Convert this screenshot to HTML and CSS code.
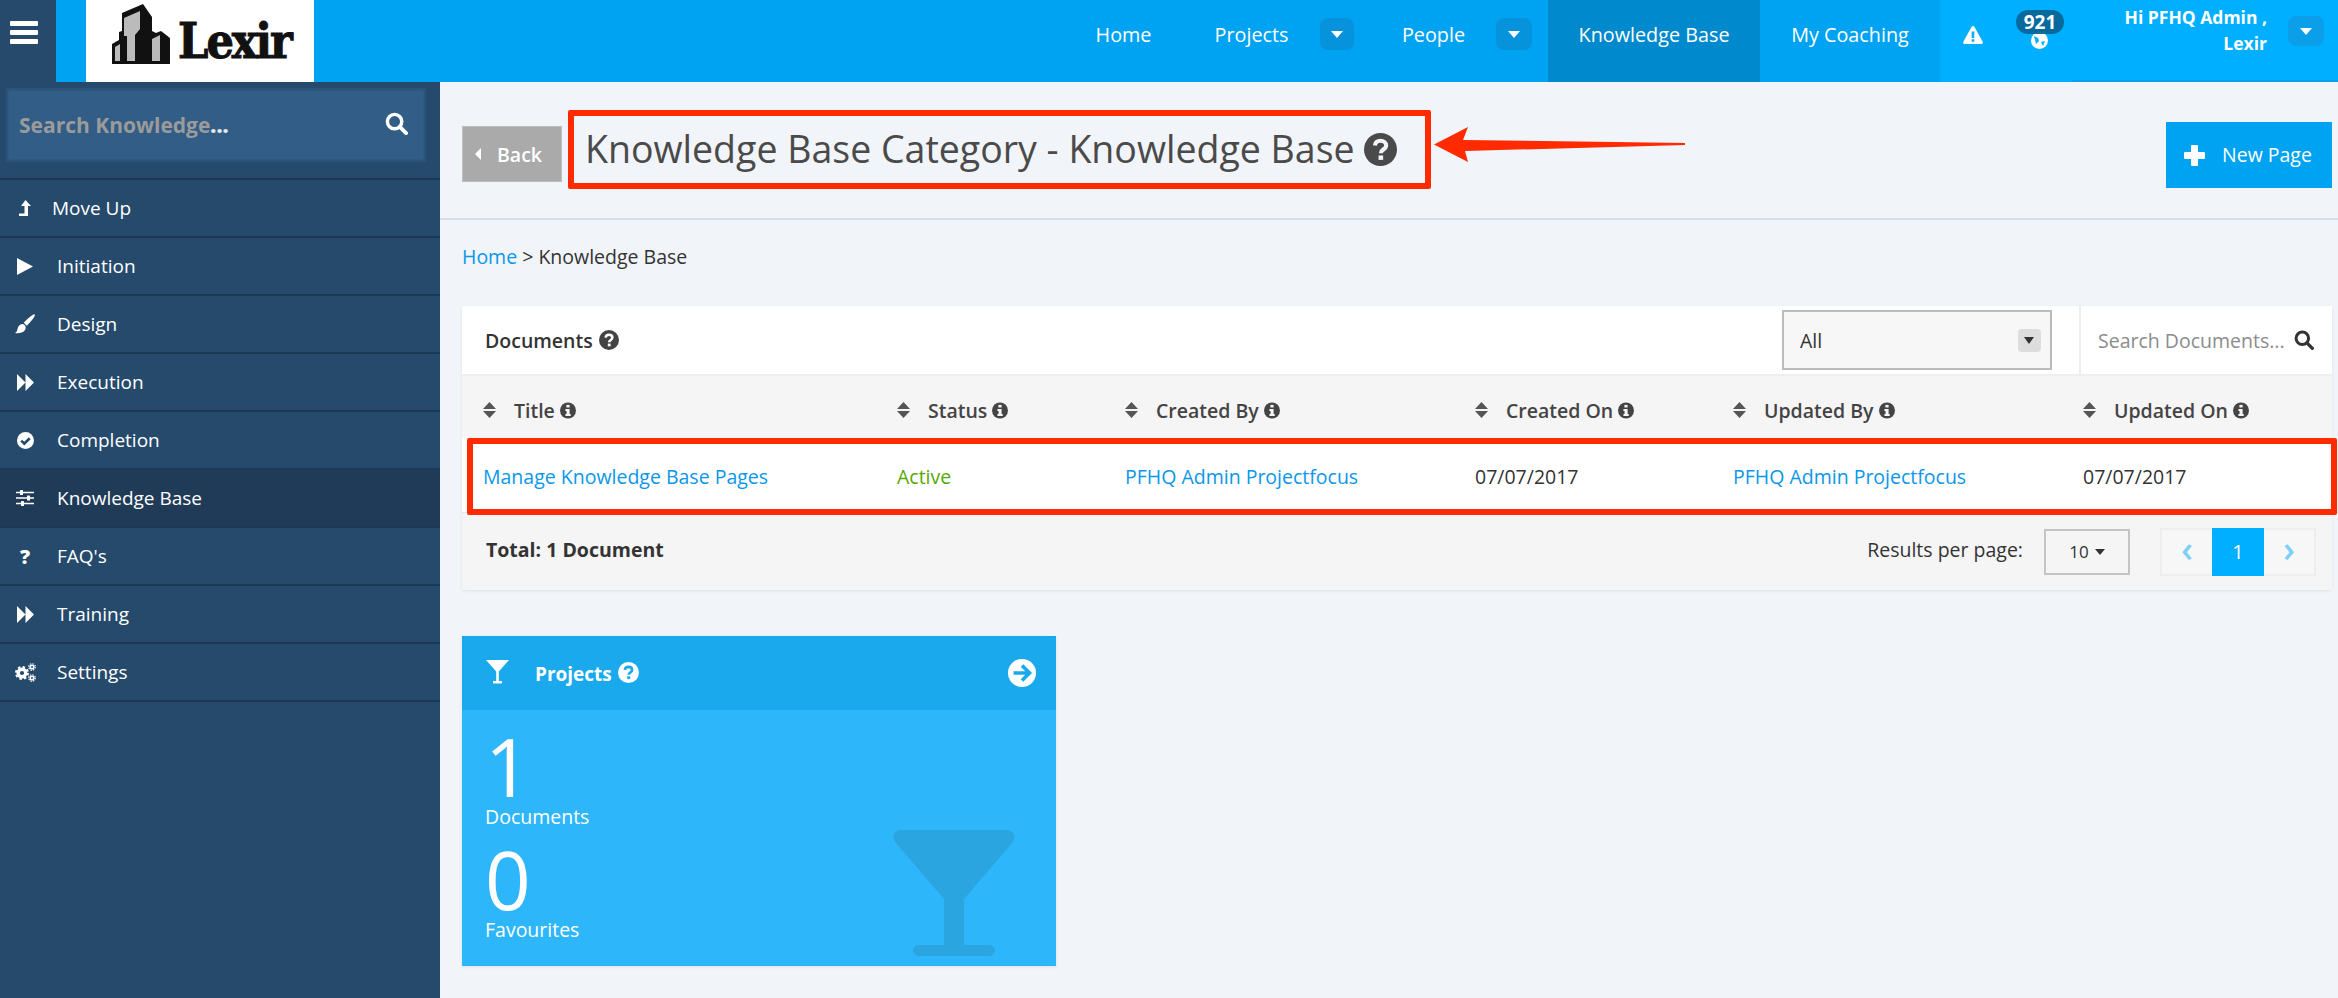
FILE: index.html
```html
<!DOCTYPE html>
<html lang="en">
<head>
<meta charset="utf-8">
<title>Knowledge Base Category - Knowledge Base</title>
<link rel="stylesheet" href="styles.css">
</head>
<body>
<svg class="sprite" xmlns="http://www.w3.org/2000/svg">
  <symbol id="i-q" viewBox="0 0 20 20"><circle cx="10" cy="10" r="10" fill="currentColor"/><path class="hole" d="M6.6 7.6c.2-1.9 1.6-2.9 3.4-2.9 1.900 0 3.400 1.100 3.400 2.800 0 2.500-3.200 2.500-3.200 4.700" fill="none" stroke-width="2.500"/><rect class="hole-f" x="8.800" y="13.600" width="2.800" height="2.700"/></symbol>
  <symbol id="i-info" viewBox="0 0 20 20"><circle cx="10" cy="10" r="10" fill="currentColor"/><rect class="hole-f" x="8" y="3" width="4" height="3.200"/><path class="hole-f" d="M6.800 8h5.200v6.400h1.400V17H6.800v-2.600h1.400v-3.800H6.800z"/></symbol>
  <symbol id="i-go" viewBox="0 0 28 28"><circle cx="14" cy="14" r="14" fill="currentColor"/><path class="hole" d="M5.500 14h15M14 6.500l7.500 7.500-7.500 7.500" fill="none" stroke-width="3.600"/></symbol>
  <symbol id="i-check" viewBox="0 0 18 18"><circle cx="9" cy="9" r="9" fill="currentColor"/><path class="hole" d="M4.500 9.200l3.200 3.200 5.800-5.800" fill="none" stroke-width="2.800"/></symbol>
  <symbol id="i-search" viewBox="0 0 24 24"><circle cx="10" cy="10" r="7.500" fill="none" stroke="currentColor" stroke-width="3.600"/><path d="M15.500 15.500l6.500 6.500" stroke="currentColor" stroke-width="4" stroke-linecap="round"/></symbol>
  <symbol id="i-martini" viewBox="0 0 122 126"><path fill="currentColor" d="M8 0h106c7 0 10 7 5 13L71 69v46h24c4 0 7 2 7 5.500s-3 5.500-7 5.500H27c-4 0-7-2-7-5.500s3-5.500 7-5.500h24V69L3 13C-2 7 1 0 8 0z"/></symbol>
  <symbol id="i-sort" viewBox="0 0 13 16"><path fill="currentColor" d="M6.500 0L13 7H0zM0 9h13l-6.500 7z"/></symbol>
  <symbol id="i-ff" viewBox="0 0 17 17"><path fill="currentColor" d="M0 0l8.500 8.500L0 17zM8.500 0L17 8.500 8.500 17z"/></symbol>
</svg>

<div class="app">
  <header class="topbar">
    <button class="burger" aria-label="Menu">
      <svg width="28" height="23" viewBox="0 0 28 23"><rect width="28" height="5" rx="1" fill="#fff"/><rect y="9" width="28" height="5" rx="1" fill="#fff"/><rect y="18" width="28" height="5" rx="1" fill="#fff"/></svg>
    </button>
    <a class="logo">
      <svg class="logo-mark" width="60" height="60" viewBox="0 0 60 60">
        <path fill="#111" d="M0 40l7-4v-8l3-1V9L31 0l9 13v14l4 2 5-2 9 7v26H0z"/>
        <path fill="#bbb" d="M12 14l16-7v18l-5 6v26h-8V32h-3zM3 43l5-3v17H3zM40 35l8-4v26h-8z"/>
      </svg>
      <span class="logo-text">Lexir</span>
    </a>
    <nav class="nav">
      <a class="nav-link nav-link--home">Home</a>
      <a class="nav-link nav-link--projects">Projects</a>
      <button class="caret-btn" aria-label="Projects menu"><i class="tri"></i></button>
      <a class="nav-link nav-link--people">People</a>
      <button class="caret-btn caret-btn--last" aria-label="People menu"><i class="tri"></i></button>
      <a class="nav-link nav-link--active">Knowledge Base</a>
      <a class="nav-link nav-link--coach">My Coaching</a>
    </nav>
    <div class="nav-right">
      <svg class="alert" width="20" height="18" viewBox="0 0 20 18"><path fill="#fff" d="M10 0c.7 0 1.200.4 1.500 1l8.200 14.800c.6 1-.1 2.200-1.200 2.200H1.500C.4 18-.3 16.800.3 15.800L8.500 1C8.800.4 9.300 0 10 0z"/><rect x="8.700" y="5.500" width="2.600" height="6.500" fill="#00afff"/><rect x="8.700" y="13.200" width="2.600" height="2.600" fill="#00afff"/></svg>
      <div class="notify">
        <svg width="17" height="17" viewBox="0 0 17 17"><circle cx="8.500" cy="8.500" r="8.500" fill="#fff"/><path fill="#00afff" d="M3 4l4 2 1 3-3 3zM10 10l4-1-2 5z"/></svg>
        <span class="badge">921</span>
      </div>
      <div class="user">
        <span class="user-name">Hi PFHQ Admin ,<br>Lexir</span>
        <button class="caret-btn caret-btn--user" aria-label="User menu"><i class="tri"></i></button>
      </div>
    </div>
  </header>

  <div class="body">
    <aside class="sidebar">
      <div class="side-search">
        <div class="side-search-box">
          <span class="side-ph">Search Knowledge<b>...</b></span>
          <svg class="side-search-ico"><use href="#i-search"/></svg>
        </div>
      </div>
      <ul class="side-list">
        <li class="side-item side-item--up"><span class="side-ico"><svg width="12" height="16" viewBox="0 0 12 16"><path fill="#fff" d="M6.500 0L12 6H9v10H0v-2.500h5.500V6H2z"/></svg></span>Move Up</li>
        <li class="side-item"><span class="side-ico"><svg width="16" height="17" viewBox="0 0 16 17"><path fill="#fff" d="M0 0l16 8.500L0 17z"/></svg></span>Initiation</li>
        <li class="side-item"><span class="side-ico"><svg width="20" height="20" viewBox="0 0 20 20"><path fill="#fff" d="M19.500.3c.6.500.4 1.500-.2 2.500-2 3.200-5 6.800-7.500 8.900l-3-3C10.800 6.200 14.500 3 17.500 1c.9-.6 1.500-1 2-.7zM7.700 10c1.700.3 3 1.700 3 3.500C10.700 17.500 6 20 0 19c1.500-1 2-2 2.500-4 .5-3 2.700-5.200 5.200-5z"/></svg></span>Design</li>
        <li class="side-item"><span class="side-ico"><svg class="ic17"><use href="#i-ff"/></svg></span>Execution</li>
        <li class="side-item"><span class="side-ico"><svg class="ic17"><use href="#i-check"/></svg></span>Completion</li>
        <li class="side-item side-item--active"><span class="side-ico"><svg width="18" height="16" viewBox="0 0 18 16"><path stroke="#fff" stroke-width="1.600" d="M0 2.500h18M0 8h18M0 13.500h18"/><rect x="4" y="0" width="3" height="5" rx=".6" fill="#fff"/><rect x="11" y="5.500" width="3" height="5" rx=".6" fill="#fff"/><rect x="5" y="11" width="3" height="5" rx=".6" fill="#fff"/></svg></span>Knowledge Base</li>
        <li class="side-item"><span class="side-ico side-ico--q">?</span>FAQ's</li>
        <li class="side-item"><span class="side-ico"><svg class="ic17"><use href="#i-ff"/></svg></span>Training</li>
        <li class="side-item"><span class="side-ico"><svg width="21" height="19" viewBox="0 0 21 19"><g fill="none" stroke="#fff"><circle cx="7" cy="10" r="3.800" stroke-width="3.400"/><circle cx="7" cy="10" r="6" stroke-width="2" stroke-dasharray="2.400 2.300"/><circle cx="17" cy="4" r="1.800" stroke-width="1.600"/><circle cx="17" cy="4" r="3.300" stroke-width="1.200" stroke-dasharray="1.400 1.200"/><circle cx="17" cy="15" r="1.800" stroke-width="1.600"/><circle cx="17" cy="15" r="3.300" stroke-width="1.200" stroke-dasharray="1.400 1.200"/></g></svg></span>Settings</li>
      </ul>
    </aside>

    <main class="main">
      <div class="page-head">
        <a class="back"><i class="tri-left"></i>Back</a>
        <div class="title-box">
          <h1 class="title">Knowledge Base Category - Knowledge Base</h1>
          <svg class="ic-title"><use href="#i-q"/></svg>
        </div>
        <svg class="arrow" width="252" height="70" viewBox="0 0 252 70"><path d="M0 34.500L34 17l-5 13 222 3v2L31 41l3 11z" fill="#ff2a00"/></svg>
        <a class="new-page">
          <svg width="21" height="21" viewBox="0 0 21 21"><path fill="#fff" stroke="#fff" stroke-linejoin="round" stroke-width="2" d="M8 1h5v7h7v5h-7v7H8v-7H1V8h7z"/></svg>
          <span class="new-page-text">New Page</span>
        </a>
      </div>

      <p class="crumbs"><a class="link">Home</a> &gt; Knowledge Base</p>

      <section class="card">
        <div class="doc-head">
          <span class="doc-title">Documents</span>
          <svg class="ic-doc"><use href="#i-q"/></svg>
          <div class="select"><span>All</span><span class="select-caret"></span></div>
          <div class="doc-search">
            <span class="doc-ph">Search Documents...</span>
            <svg class="ic-dsearch"><use href="#i-search"/></svg>
          </div>
        </div>
        <div class="grid grid--head">
          <span class="th"><svg class="ic-sort"><use href="#i-sort"/></svg>Title<svg class="ic-info"><use href="#i-info"/></svg></span>
          <span class="th"><svg class="ic-sort"><use href="#i-sort"/></svg>Status<svg class="ic-info"><use href="#i-info"/></svg></span>
          <span class="th"><svg class="ic-sort"><use href="#i-sort"/></svg>Created By<svg class="ic-info"><use href="#i-info"/></svg></span>
          <span class="th"><svg class="ic-sort"><use href="#i-sort"/></svg>Created On<svg class="ic-info"><use href="#i-info"/></svg></span>
          <span class="th"><svg class="ic-sort"><use href="#i-sort"/></svg>Updated By<svg class="ic-info"><use href="#i-info"/></svg></span>
          <span class="th"><svg class="ic-sort"><use href="#i-sort"/></svg>Updated On<svg class="ic-info"><use href="#i-info"/></svg></span>
        </div>
        <div class="grid grid--row">
          <a class="link">Manage Knowledge Base Pages</a>
          <span class="active-state">Active</span>
          <a class="link">PFHQ Admin Projectfocus</a>
          <span>07/07/2017</span>
          <a class="link">PFHQ Admin Projectfocus</a>
          <span>07/07/2017</span>
        </div>
        <div class="card-foot">
          <strong class="total">Total: 1 Document</strong>
          <span class="per-label">Results per page:</span>
          <div class="per">10<i class="tri-dark"></i></div>
          <div class="pager">
            <span class="pg pg--nav">&#8249;</span>
            <span class="pg pg--on">1</span>
            <span class="pg pg--nav">&#8250;</span>
          </div>
        </div>
      </section>

      <section class="tile">
        <div class="tile-head">
          <svg class="ic-mini" width="23" height="24" viewBox="0 0 23 24"><path fill="#fff" d="M0 0h23l-10.200 11.500V21H16v2.400H7V21h3.200v-9.500z"/></svg>
          <span class="tile-title">Projects</span>
          <svg class="ic-tq"><use href="#i-q"/></svg>
          <svg class="ic-go"><use href="#i-go"/></svg>
        </div>
        <div class="tile-body">
          <div class="stat-num">1</div>
          <div class="stat-label">Documents</div>
          <div class="stat-num stat-num--next">0</div>
          <div class="stat-label">Favourites</div>
          <svg class="tile-bg"><use href="#i-martini"/></svg>
        </div>
      </section>
    </main>
  </div>
</div>
</body>
</html>
```

FILE: styles.css
```css
* { box-sizing: border-box; }
html, body { margin: 0; padding: 0; }
body {
  font-family: "Open Sans", "Liberation Sans", sans-serif;
  font-size: 19.5px;
  color: #333;
  background: #f1f4f8;
}
button { border: 0; padding: 0; font: inherit; cursor: pointer; }
.sprite { display: none; }
.hole { stroke: var(--hole, #fff); }
.hole-f { fill: var(--hole, #fff); }

.app { min-height: 100vh; display: flex; flex-direction: column; }

/* top bar */
.topbar { height: 82px; display: flex; background: #00a2f2; flex: none; }
.burger {
  width: 56px; background: #254a6c; display: flex; justify-content: flex-start;
  padding: 21px 0 0 10px;
}
.logo {
  width: 228px; margin-left: 30px; background: #fff;
  display: flex; padding: 4px 0 0 26px; gap: 6px;
}
.logo-mark { flex: none; }
.logo-text {
  font-family: "DejaVu Serif", "Liberation Serif", serif; font-stretch: condensed; font-weight: 700; font-size: 48px;
  line-height: 1; margin-top: 13px; color: #111; -webkit-text-stroke: 1px #111; letter-spacing: -2px;
}
.nav { margin-left: auto; display: flex; color: #fff; font-size: 19.8px; font-weight: 500; }
.nav-link { height: 82px; line-height: 70px; white-space: nowrap; text-align: center; }
.nav-link--home { width: 119px; }
.nav-link--projects { width: 137px; }
.nav-link--people { width: 125px; }
.nav-link--active { width: 212px; background: #0089cc; }
.nav-link--coach { width: 180px; background: #00a2f2; }
.caret-btn {
  width: 34px; height: 32px; margin: 18px 17px 0 0; border-radius: 8px; background: #0793dc;
  display: flex; align-items: center; justify-content: center;
}
.caret-btn--last { width: 36px; margin-right: 16px; }
.tri { width: 0; height: 0; border: 6px solid transparent; border-top: 7px solid #fff; border-bottom: 0; }
.nav-right {
  width: 398px; background: #00afff; display: flex; color: #fff; position: relative;
}
.alert { margin: 26px 0 0 23px; flex: none; }
.notify { position: relative; width: 17px; height: 17px; margin: 28px 0 0 48px; flex: none; }
.badge {
  position: absolute; left: -15px; top: -18px; width: 48px; height: 24px; border-radius: 12px;
  background: rgba(8, 100, 148, .93); color: #fff; font-size: 19px; font-weight: 700; line-height: 24px; text-align: center;
}
.user {
  width: 266px; display: flex; justify-content: flex-end;
  border-bottom: 2px solid #0a9fe8; height: 82px; position: absolute; right: 0; top: 0;
}
.user-name {
  font-size: 17.5px; font-weight: 700; line-height: 26px; text-align: right; padding-top: 4px; white-space: nowrap;
}
.caret-btn--user { width: 36px; height: 30px; margin: 16px 14px 0 21px; background: #0a9fe8; }

.body { flex: 1; display: flex; }

/* sidebar */
.sidebar { width: 440px; flex: none; background: #254a6c; color: #fff; }
.side-search { height: 98px; padding: 6px 14px 0 6px; border-bottom: 2px solid #1c3855; }
.side-search-box {
  height: 74px; background: #315d86; border: 2px solid #2c5379; display: flex;
  align-items: center; justify-content: space-between; padding: 0 16px 0 11px;
  box-shadow: inset 0 0 0 1px #2d5880;
}
.side-ph { font-size: 21px; font-weight: 700; color: #9b9b9b; }
.side-ph b { color: #e6e6e6; }
.side-search-ico { width: 23px; height: 23px; color: #fff; margin-top: -3px; }
.side-list { list-style: none; margin: 0; padding: 0; }
.side-item {
  height: 58px; border-bottom: 2px solid #1c3855; display: flex; align-items: center;
  font-size: 19px;
}
.side-item--active { background: #1f3b58; }
.side-item--up .side-ico { margin-right: 2px; }
.side-ico { width: 50px; margin-right: 7px; display: flex; justify-content: center; flex: none; color: #fff; --hole: #254a6c; }
.side-ico--q { font-weight: 800; font-size: 20px; }
.ic17 { width: 17px; height: 17px; }

/* main */
.main { flex: 1; padding: 0 6px 0 22px; min-width: 0; --hole: #fff; }
.page-head {
  display: flex; align-items: flex-start; height: 138px; padding-top: 28px;
  margin: 0 -6px 0 -22px; padding-left: 22px; padding-right: 6px; border-bottom: 2px solid #d5dee6;
}
.back {
  width: 100px; height: 56px; margin-top: 16px; background: #aaa; border: 1px solid #bdbdbd; color: #fff;
  display: flex; align-items: center; padding-left: 12px; gap: 16px; font-size: 19.5px; font-weight: 600;
}
.tri-left { width: 0; height: 0; border: 6px solid transparent; border-right: 6px solid #fff; border-left: 0; }
.title-box {
  width: 863px; height: 79px; margin-left: 6px; border: 6px solid #ff2a00; border-radius: 2px;
  display: flex; align-items: center; padding-left: 11px; gap: 9px; color: #4a4a4a; --hole: #f1f4f8;
}
.title { margin: -3px 0 0; font-size: 37.5px; font-weight: 400; white-space: nowrap; }
.ic-title { width: 33px; height: 33px; }
.arrow { margin-left: 3px; flex: none; }
.new-page {
  margin: 12px 0 0 auto; width: 166px; height: 66px; background: #00a2f2; color: #fff;
  display: flex; align-items: center; padding-left: 18px; gap: 17px; font-size: 19.5px; font-weight: 500;
}
.new-page-text { margin-top: -2px; }

.crumbs { margin: 25px 0 37px; line-height: 24px; color: #333; }
.link { color: #0a97ea; }

/* documents card */
.card { background: #f5f5f5; box-shadow: 0 1px 3px rgba(0,0,0,.08); }
.doc-head {
  height: 70px; background: #fff; border-bottom: 2px solid #eee;
  display: flex; align-items: center; padding-left: 23px; color: #444; --hole: #fff;
}
.doc-title { font-weight: 600; color: #333; }
.ic-doc { width: 20px; height: 20px; margin-left: 6px; }
.select {
  margin-left: auto; width: 270px; height: 60px; background: #f7f7f7; border: 2px solid #bbb;
  display: flex; align-items: center; justify-content: space-between; padding: 0 9px 0 16px; color: #333;
}
.select-caret {
  width: 23px; height: 23px; background: #ddd; border-radius: 4px; position: relative;
}
.select-caret::after {
  content: ""; position: absolute; left: 6px; top: 8px; border: 5px solid transparent; border-top: 7px solid #333; border-bottom: 0;
}
.doc-search {
  margin-left: 27px; width: 253px; height: 68px; border-left: 2px solid #eee; display: flex; align-items: center; padding-left: 17px;
}
.doc-ph { color: #8c8c8c; font-size: 19.5px; white-space: nowrap; }
.ic-dsearch { width: 20px; height: 20px; margin-left: 9px; color: #333; flex: none; }

.grid {
  display: grid; grid-template-columns: 414px 228px 350px 258px 350px 1fr; padding-left: 21px; align-items: center;
}
.grid--head { height: 62px; font-weight: 600; color: #444; --hole: #f5f5f5; padding-top: 6px; }
.th { display: flex; align-items: center; white-space: nowrap; }
.ic-sort { width: 13px; height: 16px; margin-right: 18px; color: #555; flex: none; }
.ic-info { width: 16px; height: 17px; margin-left: 5px; flex: none; }
.grid--row { height: 75px; background: #fff; position: relative; border-bottom: 1px solid #e5e5e5; color: #333; padding-top: 3px; }
.grid--row::after {
  content: ""; position: absolute; left: 5px; right: -5px; top: 0; bottom: -3px;
  border: 6px solid #ff2a00; border-radius: 2px;
}
.active-state { color: #56a800; }

.card-foot { height: 77px; display: flex; align-items: center; padding: 0 16px 0 24px; }
.total { font-weight: 700; color: #333; margin-top: -5px; }
.per-label { margin-left: auto; color: #333; margin-top: -5px; }
.per {
  margin-left: 21px; width: 86px; height: 46px; border: 2px solid #c4c4c4; display: flex; align-items: center;
  justify-content: center; gap: 6px; font-size: 17px;
}
.tri-dark { border: 5px solid transparent; border-top: 6px solid #333; border-bottom: 0; }
.pager { margin-left: 30px; width: 156px; height: 48px; display: flex; border: 2px solid #eee; background: #f7f7f7; }
.pg { flex: 1; display: flex; align-items: center; justify-content: center; margin: -2px 0; }
.pg--nav { color: #7fd0f5; font-size: 36px; font-weight: 600; padding-bottom: 6px; }
.pg--on { flex: none; width: 52px; background: #00afff; color: #fff; font-size: 20px; }

/* tile */
.tile { margin-top: 46px; width: 594px; height: 330px; background: #2eb6fa; color: #fff; box-shadow: 0 1px 3px rgba(0,0,0,.08); --hole: #19a9ec; }
.tile-head { height: 74px; background: #19a9ec; display: flex; align-items: center; padding-left: 24px; }
.ic-mini { flex: none; margin-top: -2px; }
.tile-title { margin-left: 26px; font-weight: 700; font-size: 19px; margin-top: 2px; }
.ic-tq { width: 21px; height: 21px; margin-left: 6px; margin-top: -1px; }
.ic-go { width: 28px; height: 28px; margin-left: auto; margin-right: 20px; }
.tile-body { position: relative; height: 256px; padding: 16px 0 0 23px; }
.stat-num { font-size: 80px; line-height: 80px; height: 80px; font-weight: 400; }
.stat-num--next { margin-top: 11px; }
.stat-label { font-size: 19.5px; line-height: 22px; }
.tile-bg { position: absolute; left: 431px; top: 120px; width: 122px; height: 126px; color: #2aa5e0; }
```
